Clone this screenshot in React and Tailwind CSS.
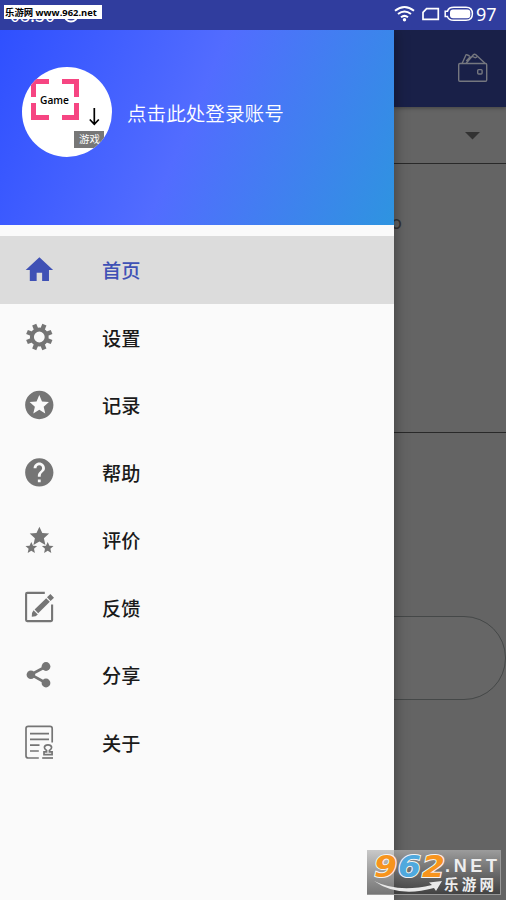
import React, { useState } from "react";

const GEAR_TEETH = [22.5, 67.5, 112.5, 157.5, 202.5, 247.5, 292.5, 337.5];
const STAR = "M0-10 2.9-3.7 9.7-3.3 4.5 1.4 6 8.3 0 4.7-6 8.3-4.5 1.4-9.7-3.3-2.9-3.7z";

// All menu icons share a 30x36 box
const ICONS = {
  home: (
    <path
      transform="translate(-1.05 1.2) scale(1.37 1.39)"
      fill="currentColor"
      d="M10 20v-6h4v6h5v-8h3L12 3 2 12h3v8z"
    />
  ),
  settings: (
    <g transform="translate(15.3 18)">
      <circle r="7.4" fill="none" stroke="currentColor" strokeWidth="4" />
      {GEAR_TEETH.map((a) => (
        <path key={a} transform={`rotate(${a})`} fill="currentColor" d="M-2.3-8-2.2-13.3H2.2L2.3-8z" />
      ))}
    </g>
  ),
  history: (
    <path
      transform="translate(-1.7 1) scale(1.415)"
      fill="currentColor"
      d="M11.99 2C6.47 2 2 6.48 2 12s4.47 10 9.99 10C17.52 22 22 17.52 22 12S17.52 2 11.99 2zm4.24 16L12 15.45 7.77 18l1.12-4.81-3.73-3.23 4.92-.42L12 5l1.92 4.53 4.92.42-3.73 3.23L16.23 18z"
    />
  ),
  help: (
    <path
      transform="translate(-1.7 1.4) scale(1.415)"
      fill="currentColor"
      d="M12 2C6.48 2 2 6.48 2 12s4.48 10 10 10 10-4.48 10-10S17.52 2 12 2zm1 17h-2v-2h2v2zm2.07-7.75l-.9.92C13.45 12.9 13 13.5 13 15h-2v-.5c0-1.1.45-2.1 1.17-2.83l1.24-1.26c.37-.36.59-.86.59-1.41 0-1.1-.9-2-2-2s-2 .9-2 2H8c0-2.21 1.79-4 4-4s4 1.79 4 4c0 .88-.36 1.68-.93 2.25z"
    />
  ),
  rate: (
    <g fill="currentColor">
      <path transform="translate(15.4 14.8)" d={STAR} />
      <path transform="translate(7.3 26) scale(.6)" d={STAR} />
      <path transform="translate(23.7 26) scale(.6)" d={STAR} />
    </g>
  ),
  feedback: (
    <g fill="none" stroke="currentColor">
      <path strokeWidth="2.1" d="M20.8 3.9H3.2Q2.1 3.9 2.1 5V31Q2.1 32.1 3.2 32.1H27Q28.1 32.1 28.1 31V15.5" />
      <path strokeWidth="5.2" d="M12.4 22.3 24 11M24.8 10.2 28.2 6.9" />
      <path fill="currentColor" stroke="none" d="M9.6 21.2 13.8 25.4 11.6 27.2 7.8 27.8 8 24z" />
    </g>
  ),
  share: (
    <g fill="currentColor">
      <path fill="none" stroke="currentColor" strokeWidth="2.8" d="M22 9.6 7 17.6 22 26" />
      <circle cx="22" cy="9.5" r="4.4" />
      <circle cx="6.9" cy="17.7" r="4.3" />
      <circle cx="22" cy="26" r="4.4" />
    </g>
  ),
  about: (
    <g fill="none" stroke="currentColor" strokeWidth="1.7">
      <path d="M28.2 18.5V4.6Q28.2 2.3 26 2.3H4.2Q2 2.3 2 4.6V31.7Q2 34 4.2 34H14.8" />
      <path d="M6 9.7H25M6 15.3H25M6 21.2H15.5M6 27H14.8" />
      <path d="M22.6 27.8V26.6Q20.2 25.2 20.4 23.2 20.8 20.8 24 20.8T27.6 23.2Q27.8 25.2 25.4 26.6V27.8H28.1V30.7H20V27.8z" />
      <path d="M18.2 34H29" />
    </g>
  ),
};

const MENU = [
  { id: "home", label: "首页" },
  { id: "settings", label: "设置" },
  { id: "history", label: "记录" },
  { id: "help", label: "帮助" },
  { id: "rate", label: "评价" },
  { id: "feedback", label: "反馈" },
  { id: "share", label: "分享" },
  { id: "about", label: "关于" },
];

function StatusBar() {
  return (
    <div className="relative z-20 flex h-[30px] shrink-0 items-start justify-end overflow-hidden bg-[#303d9e] text-white">
      <span className="absolute left-[10px] top-[2px] text-[18px] leading-[24px]">08:50</span>
      <svg className="absolute left-[63px] top-[7px]" width="16" height="16" viewBox="0 0 16 16" fill="none" stroke="white" strokeWidth="2">
        <circle cx="8" cy="8" r="6.6" />
      </svg>
      <div className="absolute left-[4px] top-[5px] h-[14px] w-[98px] overflow-hidden whitespace-nowrap bg-white pl-[1px] font-['Open_Sans','Noto_Sans_CJK_SC',sans-serif] text-[9.4px] font-bold leading-[15px] text-black">
        乐游网 www.962.net
      </div>
      <svg width="81" height="30" viewBox="0 0 81 30" fill="none" stroke="white">
        <g strokeWidth="2">
          <path d="M1 10.8Q10.5 3.2 20 10.8" />
          <path d="M4 14Q10.5 9 17 14" />
          <path d="M7 17.2Q10.5 14.5 14 17.2" />
        </g>
        <circle cx="10.5" cy="19.8" r="1.7" fill="white" stroke="none" />
        <path strokeWidth="1.7" d="M32.6 8.6H44.3V19.4H29V12.3z" />
        <path strokeWidth="1.5" d="M60 7.3H72Q78.4 7.3 78.4 13.8T72 20.3H60Q54.5 20.3 53.5 16.6H51.2V11.2H53.5Q54.5 7.3 60 7.3z" />
        <rect x="56" y="9.4" width="20.3" height="8.8" rx="3" fill="white" stroke="none" />
      </svg>
      <span className="w-[31px] pl-[1px] font-['Noto_Sans',sans-serif] text-[18px] leading-[28px]">97</span>
    </div>
  );
}

function Avatar() {
  return (
    <div className="relative h-[90px] w-[90px] shrink-0 overflow-hidden rounded-full bg-white">
      <svg className="absolute inset-0" width="90" height="90" viewBox="0 0 90 90" fill="none">
        <g stroke="#f64582" strokeWidth="5">
          <path d="M27 14.5H11.5V30M40 14.5H54.5V30M27 50.5H11.5V36M40 50.5H54.5V36" />
        </g>
        <path stroke="black" strokeWidth="1.7" d="M72.3 41V57M67.8 52.5 72.3 57.3 76.8 52.5" />
      </svg>
      <span className="absolute left-[18px] top-[26px] font-['Open_Sans',sans-serif] text-[10.2px] font-semibold leading-[14px] text-black">
        Game
      </span>
      <span className="absolute left-[52px] top-[64px] h-[17px] w-[30px] bg-[#777] pl-[5px] text-[10.5px] leading-[16px] text-white">
        游戏
      </span>
    </div>
  );
}

function Drawer() {
  const [active, setActive] = useState("home");

  return (
    <aside className="z-10 flex w-[394px] shrink-0 flex-col bg-[#fafafa] shadow-[0_0_14px_rgba(0,0,0,0.4)]">
      <div className="flex h-[195px] shrink-0 bg-[linear-gradient(113deg,#2f50ff_0%,#526cff_48%,#2e94e0_100%)] pl-[22px] pt-[37px]">
        <Avatar />
        <span className="ml-[15px] mt-[32px] text-[19.6px] font-[350] leading-[28px] text-white">
          点击此处登录账号
        </span>
      </div>
      <nav className="pt-[11px]">
        {MENU.map((item) => (
          <button
            key={item.id}
            onClick={() => setActive(item.id)}
            className={`flex h-[67.5px] w-full items-center pl-6 text-left ${
              active === item.id ? "bg-[#dcdcdc] text-[#3f51b5]" : "text-[#757575]"
            }`}
          >
            <svg width="30" height="36" viewBox="0 0 30 36">
              {ICONS[item.id]}
            </svg>
            <span
              className={`ml-[48px] pt-[1px] text-[19.2px] font-medium leading-[28px] ${
                active === item.id ? "" : "text-[#1a1a1a]"
              }`}
            >
              {item.label}
            </span>
          </button>
        ))}
      </nav>
    </aside>
  );
}

// Page under the drawer, already dimmed by the scrim
function DimmedPage() {
  return (
    <main className="flex min-w-0 flex-1 flex-col overflow-hidden bg-[#646464]">
      <div className="z-[1] flex h-[77px] shrink-0 justify-end bg-[#192048] pr-[18px] pt-[22px] shadow-[0_1px_4px_rgba(0,0,0,0.35)]">
        <svg width="31" height="31" viewBox="0 0 31 31" fill="none" stroke="#75777f" strokeWidth="1.4">
          <rect x="1.7" y="11.5" width="28" height="17.8" rx="1.2" />
          <path d="M5.2 11.2 8.8 3.2Q9.2 2.3 10.2 2.8L12.6 4M9.2 11.2 16.4 2.8Q17.4 1.6 18.6 2.6L28 11.2M9.3 9 13.5 4.5M12.5 6.5 15.7 4.5 18.2 5.8 20 4.8" />
          <rect x="20.7" y="17.6" width="4.4" height="4.4" rx="1" />
        </svg>
      </div>
      <div className="flex h-[57px] shrink-0 items-start justify-end border-b border-[#292929] pr-[26px] pt-[25px]">
        <svg width="15" height="8" viewBox="0 0 15 8" fill="#323232">
          <path d="M0 0H15L7.5 7.5z" />
        </svg>
      </div>
      <div className="h-[269px] shrink-0 border-b border-[#292929] pt-[47px]">
        <span className="-ml-[3px] block font-['Roboto',sans-serif] text-[19px] leading-[24px] text-[#323232]">o</span>
      </div>
      <div className="-ml-[60px] mt-[183px] h-[84px] shrink-0 rounded-r-full border border-[#454848] bg-[#666]" />
    </main>
  );
}

function SiteBadge() {
  return (
    <div className="absolute left-[367px] top-[850px] z-20 h-[45px] w-[134px] border-b border-r border-[#999] bg-gradient-to-b from-[#b4b4b4b3] to-[#303030a6]">
      <svg width="134" height="44" viewBox="0 0 134 44">
        <g
          fontFamily="DejaVu Sans, sans-serif"
          fontWeight="bold"
          fontStyle="italic"
          fontSize="31"
          stroke="#f4f4f4"
          strokeWidth="2"
          paintOrder="stroke"
        >
          <text x="7" y="26.5" fill="#f7941d" textLength="23" lengthAdjust="spacingAndGlyphs">9</text>
          <text x="31" y="26.5" fill="#4fa9de" textLength="23" lengthAdjust="spacingAndGlyphs">6</text>
          <text x="55" y="26.5" fill="#f7941d" textLength="23" lengthAdjust="spacingAndGlyphs">2</text>
        </g>
        <path fill="#e9e9e9" d="M7 31Q31 43 65 35L62 32.5 75 31 69 41 67 38Q31 48 7 31z" />
        <g fill="#eee">
          <text x="78" y="22" fontFamily="Liberation Sans, sans-serif" fontWeight="bold" fontSize="18" textLength="52">.NET</text>
          <text x="77" y="39.5" fontFamily="Noto Sans CJK SC, sans-serif" fontWeight="bold" fontSize="14.5" textLength="50">乐游网</text>
        </g>
      </svg>
    </div>
  );
}

export default function App() {
  return (
    <div className="relative flex h-[900px] w-[506px] flex-col overflow-hidden bg-[#646464] font-['Noto_Sans_CJK_SC',sans-serif]">
      <StatusBar />
      <div className="flex min-h-0 flex-1">
        <Drawer />
        <DimmedPage />
      </div>
      <SiteBadge />
    </div>
  );
}
